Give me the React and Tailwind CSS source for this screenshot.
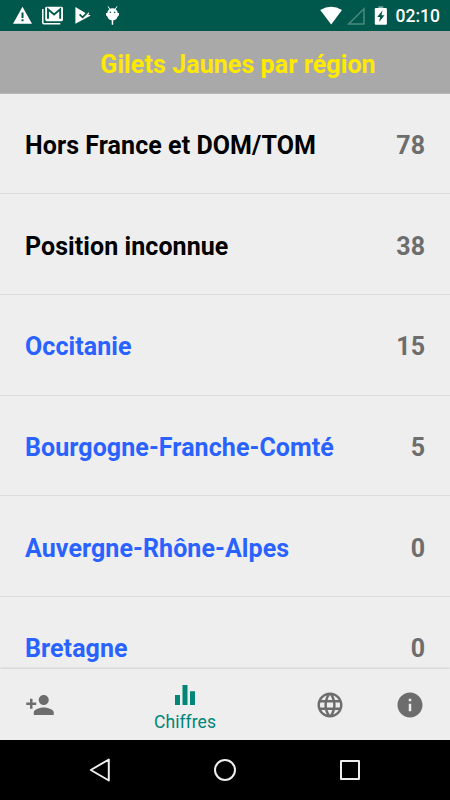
const regions = [
  { name: "Hors France et DOM/TOM", count: 78, link: false },
  { name: "Position inconnue", count: 38, link: false },
  { name: "Occitanie", count: 15, link: true },
  { name: "Bourgogne-Franche-Comté", count: 5, link: true },
  { name: "Auvergne-Rhône-Alpes", count: 0, link: true },
  { name: "Bretagne", count: 0, link: true },
];

function Icon({ d, className }) {
  return (
    <svg viewBox="0 0 24 24" fill="currentColor" className={`h-[30px] w-[30px] shrink-0 ${className || ""}`}>
      <path d={d} />
    </svg>
  );
}

function StatusLeft() {
  return (
    <svg width="130" height="31" viewBox="0 0 130 31" fill="white">
      <path fillRule="evenodd" d="M22.5 6.7 32 23.8H13zM21.5 12.5v5.5h2v-5.5zm0 6.8v2h2v-2z" />
      <path d="M42.8 9v13.5q0 1.2 1.2 1.2h16.3" fill="none" stroke="white" strokeWidth="1.5" />
      <rect x="45.2" y="6.8" width="17.8" height="14.4" rx="1.4" />
      <path d="M48 18.8V9.2l6.1 5.2 6.1-5.2v9.6" fill="none" stroke="#00574b" strokeWidth="1.9" />
      <path d="M75.4 7 86 13.2l1.8-1.7 1.5 1.5-1.2 1.4 2.7 1.2L75.4 23.8z" />
      <path d="m79.6 14.4 3 3 6-6.2" fill="none" stroke="#00574b" strokeWidth="1.7" />
      <path d="m108 6.4 1.9 3M117 6.4l-1.9 3" fill="none" stroke="white" strokeWidth="1" />
      <path d="M107.3 13.2a5.2 5 0 0 1 10.4 0v2q0 5-5.2 5.2-5.2-.2-5.2-5.2z" />
      <path d="M106 13h2v4l-2-1.8zM117 13h2v2.2l-2 1.8zM111.7 20h1.5v4.8h-1.5z" />
      <circle cx="110.3" cy="12.3" r=".8" fill="#00574b" />
      <circle cx="114.7" cy="12.3" r=".8" fill="#00574b" />
    </svg>
  );
}

function StatusRight() {
  return (
    <svg width="68" height="31" viewBox="320 0 68 31" fill="white">
      <path d="M320.2 10.1Q331.3 3.3 342 10.1L331.2 24.5z" />
      <path d="M348.7 24H364V8.8z" fill="none" stroke="#4b8980" strokeWidth="1.5" />
      <path d="M378.4 6.3h4.8v2h-4.8z" fill="#7faba5" />
      <path fillRule="evenodd" d="M375.9 8.1h9.9q1.1 0 1.1 1v14.4q0 1.2-1.1 1.2h-9.9q-1.1 0-1.1-1.2V9.1q0-1 1.1-1zM382.5 10.6l-5.3 6.4h2.9l-1 5 5.4-6.8h-3z" />
    </svg>
  );
}

export default function App() {
  return (
    <div className="flex h-[800px] w-[450px] flex-col overflow-hidden bg-[#eee] font-['Roboto',sans-serif]">
      <header className="flex h-[31px] shrink-0 items-center justify-between bg-[#00574b] pr-[10px] text-white">
        <StatusLeft />
        <div className="flex items-center gap-[8px]">
          <StatusRight />
          <span className="pt-[2px] text-[17.5px] leading-[29px] font-medium">02:10</span>
        </div>
      </header>
      <h1 className="flex h-[62.6px] shrink-0 items-center justify-center border-b border-[#b8b8b8] bg-[#a9a9a9] pt-[5px] pl-[26px] text-[25px] font-bold tracking-[0.08px] text-[#ffe900]">
        Gilets Jaunes par région
      </h1>
      <main className="min-h-0 flex-1 overflow-hidden">
        <ul>
          {regions.map((r) => (
            <li key={r.name} className="flex h-[100.7px] items-center justify-between border-b border-[#dcdcdc] px-[25px] pt-[4.6px] text-[25px] font-bold">
              <span className={r.link ? "tracking-[0.08px] text-[#2962ff]" : "tracking-[0.07px] text-black"}>{r.name}</span>
              <span className="text-[#6d6d6d]">{r.count}</span>
            </li>
          ))}
        </ul>
      </main>
      <nav className="z-10 flex h-[71px] shrink-0 justify-between bg-[#eee] px-[25px] text-[#6d6d6d] shadow-[0_-1px_2px_rgba(0,0,0,0.12)]">
        <Icon className="mt-[21px]" d="M15 12c2.21 0 4-1.79 4-4s-1.79-4-4-4-4 1.79-4 4 1.79 4 4 4zm-9-2V7H4v3H1v2h3v3h2v-3h3v-2H6zm9 4c-2.67 0-8 1.34-8 4v2h16v-2c0-2.66-5.33-4-8-4z" />
        <div className="flex w-[122px] flex-col items-center pt-[11px] text-[#008577]">
          <Icon d="M10 20h4V4h-4v16zm-6 0h4v-8H4v8zM16 9v11h4V9h-4z" />
          <span className="pt-[1px] text-[17.5px] leading-[22px] tracking-[0.05px]">Chiffres</span>
        </div>
        <div className="flex gap-[50px] pt-[21px]">
          <Icon d="M11.99 2C6.47 2 2 6.48 2 12s4.47 10 9.99 10C17.52 22 22 17.52 22 12S17.52 2 11.99 2zm6.93 6h-2.95c-.32-1.25-.78-2.45-1.38-3.56 1.84.63 3.37 1.91 4.33 3.56zM12 4.04c.83 1.2 1.48 2.53 1.91 3.96h-3.82c.43-1.43 1.08-2.76 1.91-3.96zM4.26 14C4.1 13.36 4 12.69 4 12s.1-1.36.26-2h3.38c-.08.66-.14 1.32-.14 2s.06 1.34.14 2H4.26zm.82 2h2.95c.32 1.25.78 2.45 1.38 3.56-1.84-.63-3.37-1.9-4.33-3.56zm2.95-8H5.08c.96-1.66 2.49-2.93 4.33-3.56C8.81 5.55 8.35 6.75 8.03 8zM12 19.96c-.83-1.2-1.48-2.53-1.91-3.96h3.82c-.43 1.43-1.08 2.76-1.91 3.96zM14.34 14H9.66c-.09-.66-.16-1.32-.16-2s.07-1.35.16-2h4.68c.09.65.16 1.32.16 2s-.07 1.34-.16 2zm.25 5.56c.6-1.11 1.06-2.31 1.38-3.56h2.95c-.96 1.65-2.49 2.93-4.33 3.56zM16.36 14c.08-.66.14-1.32.14-2s-.06-1.34-.14-2h3.38c.16.64.26 1.31.26 2s-.1 1.36-.26 2h-3.38z" />
          <Icon d="M12 2C6.48 2 2 6.48 2 12s4.48 10 10 10 10-4.48 10-10S17.52 2 12 2zm1 15h-2v-6h2v6zm0-8h-2V7h2v2z" />
        </div>
      </nav>
      <footer className="z-10 flex h-[60px] shrink-0 items-center justify-center gap-[95px] bg-black">
        <svg width="30" height="30" viewBox="0 0 30 30" fill="none" stroke="#eee" strokeWidth="2" strokeLinejoin="round">
          <path d="M23.8 4.5v21L5.8 15z" />
        </svg>
        <svg width="30" height="30" viewBox="0 0 30 30" fill="none" stroke="#eee" strokeWidth="2">
          <circle cx="15" cy="15" r="10" />
        </svg>
        <svg width="30" height="30" viewBox="0 0 30 30" fill="none" stroke="#eee" strokeWidth="2" strokeLinejoin="round">
          <rect x="6" y="6" width="18" height="18" />
        </svg>
      </footer>
    </div>
  );
}
